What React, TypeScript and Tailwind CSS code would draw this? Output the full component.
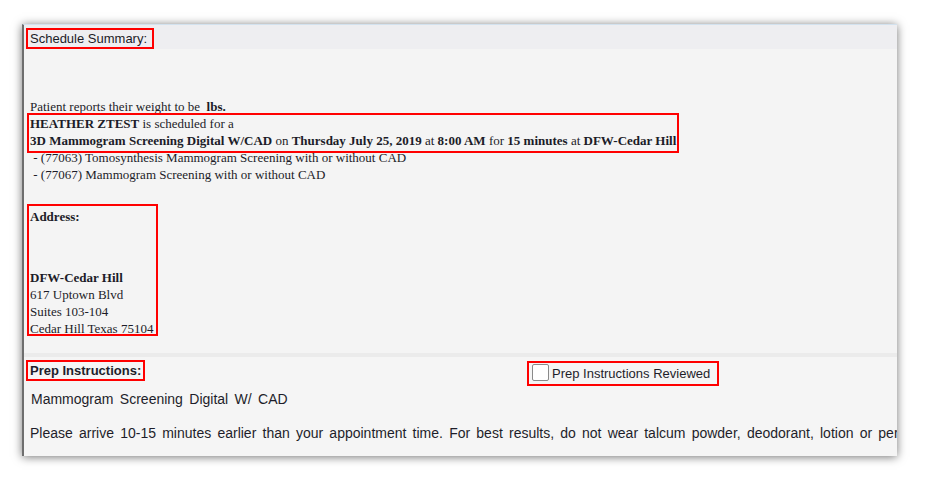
import React from "react";

const serif = "font-['Liberation_Serif','Times_New_Roman',serif]";
const sans = "font-['Liberation_Sans',Arial,sans-serif]";

export default function App() {
  return (
    <div className="w-[927px] h-[484px] bg-white pt-[24px] pl-[22px] overflow-hidden">
      <div className="w-[875px] h-[432px] bg-[#f4f4f4] border-l-2 border-l-[#6e6e6e] border-t border-t-[#d3e2ef] shadow-[0_1px_9px_rgba(0,0,0,0.55)] overflow-hidden flex flex-col text-[#1c1c28]">
        {/* header */}
        <div className={`h-[24px] shrink-0 bg-[#eeeef1] pl-[4px] pt-[5px] ${sans}`}>
          <span className="inline-block align-top pl-[2px] pr-[5px] text-[13px] leading-[17px] outline-2 outline-[#ff0000]">
            Schedule Summary:
          </span>
        </div>

        {/* summary body */}
        <div className={`h-[304px] shrink-0 pt-[49px] pl-[6px] text-[13px] leading-[17px] ${serif}`}>
          <div>
            Patient reports their weight to be <b>&nbsp;lbs.</b>
          </div>
          <div className="relative w-fit">
            <span className="pointer-events-none absolute -left-[3px] -right-[3px] -top-[2px] -bottom-[4px] border-2 border-[#ff0000]" />
            <div>
              <b>HEATHER ZTEST</b> is scheduled for a
            </div>
            <div>
              <b>3D Mammogram Screening Digital W/CAD</b> on <b>Thursday July 25, 2019</b> at <b>8:00 AM</b> for{" "}
              <b>15 minutes</b> at <b>DFW-Cedar Hill</b>
            </div>
          </div>
          <div className="whitespace-pre"> - (77063) Tomosynthesis Mammogram Screening with or without CAD</div>
          <div className="whitespace-pre"> - (77067) Mammogram Screening with or without CAD</div>

          <div className="relative w-fit mt-[25px]">
            <span className="pointer-events-none absolute -left-[3px] -right-[5px] -top-[4px] bottom-[1px] border-2 border-[#ff0000]" />
            <div className="font-bold">Address:</div>
            <div className="h-[44px]" />
            <div className="font-bold">DFW-Cedar Hill</div>
            <div>617 Uptown Blvd</div>
            <div>Suites 103-104</div>
            <div>Cedar Hill Texas 75104</div>
          </div>
        </div>

        {/* separator */}
        <div className="h-[4px] shrink-0 bg-[#ebebeb]" />

        {/* prep section */}
        <div className={`flex-1 bg-[#f5f5f5] ${sans} text-[#1e1e2a]`}>
          <div className="flex items-start">
            <div className="w-[505px] shrink-0 pl-[4px] pt-[1px]">
              <span className="inline-block px-[2px] text-[13px] leading-[17px] font-bold outline-2 outline-[#ff0000]">
                Prep Instructions:
              </span>
            </div>
            <div className="mt-[6px] h-[21px] w-[188px] flex items-start pl-[3px] outline-2 outline-[#ff0000]">
              <span className="mt-[1px] w-[17px] h-[17px] shrink-0 bg-white border border-[#8a8a8a] rounded-[2px]" />
              <span className="ml-[3px] mt-[2px] text-[13px] leading-[17px] whitespace-nowrap">Prep Instructions Reviewed</span>
            </div>
          </div>
          <div className="mt-[7px] pl-[7px] text-[14px] leading-[17px] [word-spacing:2.5px] whitespace-nowrap">
            Mammogram Screening Digital W/ CAD
          </div>
          <div className="mt-[17px] pl-[6px] text-[14px] leading-[17px] [word-spacing:2.3px] whitespace-nowrap">
            Please arrive 10-15 minutes earlier than your appointment time. For best results, do not wear talcum powder, deodorant, lotion or per
          </div>
        </div>
      </div>
    </div>
  );
}
